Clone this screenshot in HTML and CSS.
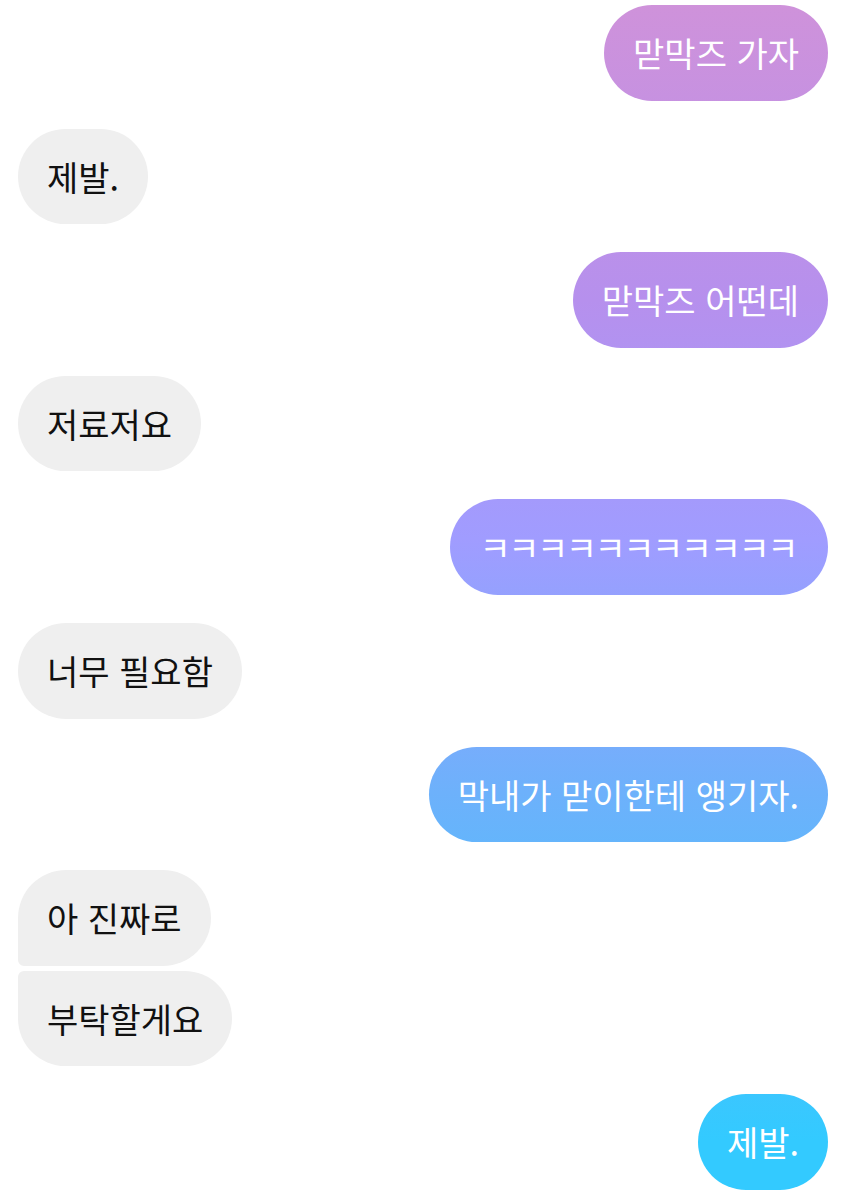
FILE: index.html
```html
<!DOCTYPE html>
<html lang="ko">

<head>
    <meta charset="UTF-8">
    <meta name="viewport" content="width=device-width, initial-scale=1.0">
    <title>Chat</title>
    <link rel="stylesheet" href="styles.css">
</head>

<body>
    <div class="chat">
        <div class="msg sent">맏막즈 가자</div>
        <div class="msg received">제발.</div>
        <div class="msg sent">맏막즈 어떤데</div>
        <div class="msg received">저료저요</div>
        <div class="msg sent laugh">ㅋㅋㅋㅋㅋㅋㅋㅋㅋㅋㅋ</div>
        <div class="msg received">너무 필요함</div>
        <div class="msg sent">막내가 맏이한테 앵기자.</div>
        <div class="group">
            <div class="msg received first">아 진짜로</div>
            <div class="msg received last">부탁할게요</div>
        </div>
        <div class="msg sent">제발.</div>
    </div>
</body>

</html>
```

FILE: styles.css
```css
body {
    margin: 0;
    background-color: #fff;
    font-family: "Noto Sans CJK KR", "Noto Sans", sans-serif;
}

.chat {
    display: flex;
    flex-direction: column;
    gap: 28px;
    padding: 5px 18px;
}

.group {
    display: flex;
    flex-direction: column;
    gap: 5px;
}

.msg {
    font-size: 34px;
    line-height: 48px;
    padding: 24px 29px 23.6px;
    border-radius: 48px;
    white-space: nowrap;
}

.sent {
    align-self: flex-end;
    color: #fff;
    background: linear-gradient(180deg, #cf92da 0%, #b690ed 25%, #a09cff 45%, #6db1fb 66%, #33caff 95%) fixed;
}

.laugh {
    letter-spacing: -2.5px;
    padding-right: 32px;
}

.received {
    align-self: flex-start;
    color: #111;
    background-color: #efefef;
}

.received.first {
    border-bottom-left-radius: 6px;
}

.received.last {
    border-top-left-radius: 6px;
}
```
